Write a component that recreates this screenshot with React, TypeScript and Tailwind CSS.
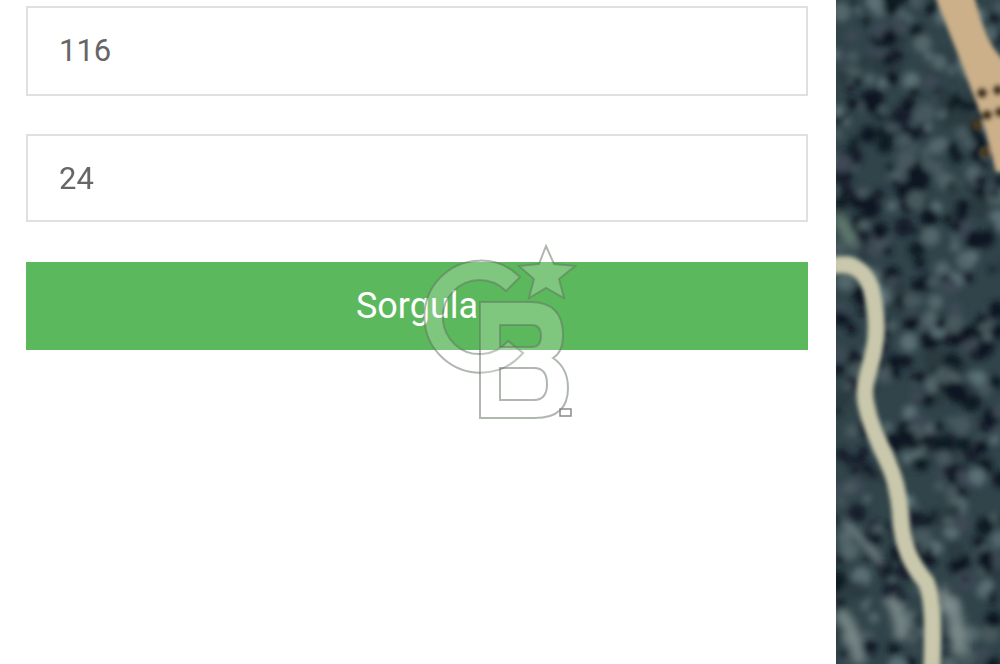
import React from "react";

// small seeded generator so the tree blotches stay the same between runs
function makeBlobs(count: number, seed: number) {
  let s = seed;
  const next = () => {
    s = (s * 16807) % 2147483647;
    return (s - 1) / 2147483646;
  };
  const blobs: { x: number; y: number; r: number; c: string }[] = [];
  const colors = ["#0d1422", "#0f1a24", "#151f2c", "#0d1422", "#2a3a40", "#46595d", "#5a7074", "#3d4a55", "#52666a"];
  for (let i = 0; i < count; i++) {
    blobs.push({
      x: next() * 170 - 3,
      y: next() * 670 - 3,
      r: 3 + next() * 7,
      c: colors[Math.floor(next() * colors.length)],
    });
  }
  return blobs;
}

const blobs = makeBlobs(620, 48271);

const roadPath =
  "M-4 266 C14 262 28 268 35 288 C41 312 42 330 38 350 C34 372 26 384 30 404 C34 424 40 436 50 458 C60 478 64 500 65 522 C67 548 76 566 90 582 C98 600 97 630 96 668";

function AerialMap() {
  return (
    <svg viewBox="0 0 164 664" className="block w-[164px] h-[664px] shrink-0" preserveAspectRatio="none">
      <defs>
        <filter id="soft" x="-10%" y="-10%" width="120%" height="120%">
          <feGaussianBlur stdDeviation="3.2" />
        </filter>
        <filter id="softer" x="-10%" y="-10%" width="120%" height="120%">
          <feGaussianBlur stdDeviation="2" />
        </filter>
        <filter id="softest" x="-10%" y="-10%" width="120%" height="120%">
          <feGaussianBlur stdDeviation="4" />
        </filter>
      </defs>
      <rect width="164" height="664" fill="#31444a" />
      <g filter="url(#soft)">
        {blobs.map((b, i) => (
          <circle key={i} cx={b.x} cy={b.y} r={b.r} fill={b.c} />
        ))}
      </g>
      {/* washed out clearings beside the road */}
      <g filter="url(#softest)" fill="none" stroke="#8b9a98" strokeOpacity="0.75">
        <path d="M0 214 C6 222 12 232 16 244" stroke="#6f8a78" strokeWidth="14" />
        <path d="M8 522 C24 536 36 550 48 566" strokeWidth="7" />
        <path d="M2 612 C14 622 20 640 24 664" strokeWidth="14" />
        <path d="M54 596 C60 606 66 620 66 640" strokeWidth="14" />
        <path d="M104 590 C114 600 122 616 124 654" strokeWidth="16" />
      </g>
      <g filter="url(#softer)">
        {/* sandy track, top right */}
        <path d="M98 -6 L124 60 L146 118 L160 172 L170 172 L170 62 C156 50 146 30 138 -6 Z" fill="#cbb08a" />
        {[
          [146, 93],
          [162, 90],
          [151, 115],
          [164, 112],
          [141, 125],
          [149, 152],
        ].map(([x, y], i) => (
          <circle key={i} cx={x} cy={y} r="5.5" fill="#4a3a22" />
        ))}
        {/* pale dirt road */}
        <path d={roadPath} fill="none" stroke="#c9c8ac" strokeWidth="17" />
      </g>
    </svg>
  );
}

export default function App() {
  return (
    <div className="relative flex w-[1000px] h-[664px] overflow-hidden bg-white font-['Roboto',sans-serif]">
      <div className="w-[836px] shrink-0 pt-[6px] pl-[26px] pr-[28px] flex flex-col gap-[38px] blur-[0.7px]">
        <input
          readOnly
          value="116"
          className="w-full h-[90px] pl-[31px] pr-[32px] pb-[2px] border-2 border-[#e0e0e0] bg-white text-[31px] text-[#666666] outline-none"
        />
        <input
          readOnly
          value="24"
          className="w-full h-[88px] pl-[31px] pr-[32px] border-2 border-[#e0e0e0] bg-white text-[31px] text-[#666666] outline-none"
        />
        <button className="w-full h-[88px] mt-[2px] bg-[#5cb85c] text-white text-[36px]">Sorgula</button>
      </div>
      <AerialMap />

      {/* watermark logo over the form */}
      <svg viewBox="0 0 1000 664" className="absolute inset-0 w-[1000px] h-[664px] pointer-events-none blur-[0.5px]">
        <g fill="#ffffff" fillOpacity="0.22" stroke="#5f6f5f" strokeOpacity="0.5" strokeWidth="2" fillRule="evenodd">
          <path d="M520 277 A56 56 0 1 0 523 353 L508 341 A37 37 0 1 1 506 291 Z" />
          <path d="M480 302 H530 Q563 302 563 335 Q563 352 553 358 Q568 368 568 388 Q568 418 535 418 H480 Z M500 325 V347 H532 Q541 347 541 336 Q541 325 532 325 Z M500 368 V400 H534 Q547 400 547 384 Q547 368 534 368 Z" />
          <path d="M546 246 L554 264 L575 266 L559 279 L564 298 L546 288 L529 298 L534 279 L519 266 L539 264 Z" />
        </g>
        <rect x="560" y="409" width="11" height="7" fill="none" stroke="#8a8a8a" strokeWidth="1.5" />
      </svg>
    </div>
  );
}
